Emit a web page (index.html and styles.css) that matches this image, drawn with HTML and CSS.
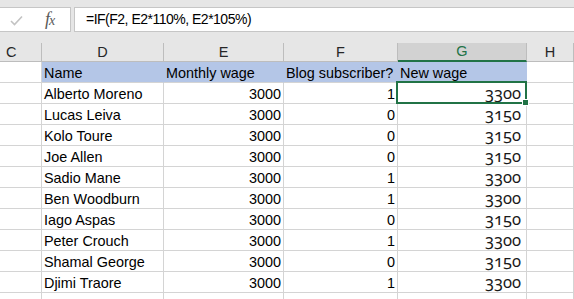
FILE: index.html
```html
<!DOCTYPE html>
<html>
<head>
<meta charset="utf-8">
<link rel="stylesheet" href="styles.css">
</head>
<body>
<div class="topbar">
  <div class="fbar">
    <div class="namebox">
      <svg class="check" width="13" height="11" viewBox="0 0 13 11"><path d="M1 6 L4.5 9.5 L12 1.5" fill="none" stroke="#c3c3c3" stroke-width="1.6"/></svg>
      <span class="fx">f<span class="x">x</span></span>
    </div>
    <div class="formula">=IF(F2, E2*110%, E2*105%)</div>
  </div>
</div>
<div class="sheet">
  <div class="ch c-c">C</div>
  <div class="ch">D</div>
  <div class="ch">E</div>
  <div class="ch">F</div>
  <div class="ch sel">G</div>
  <div class="ch">H</div>

  <div class="cell"></div>
  <div class="cell hd">Name</div>
  <div class="cell hd">Monthly wage</div>
  <div class="cell hd">Blog subscriber?</div>
  <div class="cell hd">New wage</div>
  <div class="cell"></div>

  <div class="cell"></div><div class="cell">Alberto Moreno</div><div class="cell num">3000</div><div class="cell num">1</div><div class="cell old active">3300</div><div class="cell"></div>
  <div class="cell"></div><div class="cell">Lucas Leiva</div><div class="cell num">3000</div><div class="cell num">0</div><div class="cell old">3150</div><div class="cell"></div>
  <div class="cell"></div><div class="cell">Kolo Toure</div><div class="cell num">3000</div><div class="cell num">0</div><div class="cell old">3150</div><div class="cell"></div>
  <div class="cell"></div><div class="cell">Joe Allen</div><div class="cell num">3000</div><div class="cell num">0</div><div class="cell old">3150</div><div class="cell"></div>
  <div class="cell"></div><div class="cell">Sadio Mane</div><div class="cell num">3000</div><div class="cell num">1</div><div class="cell old">3300</div><div class="cell"></div>
  <div class="cell"></div><div class="cell">Ben Woodburn</div><div class="cell num">3000</div><div class="cell num">1</div><div class="cell old">3300</div><div class="cell"></div>
  <div class="cell"></div><div class="cell">Iago Aspas</div><div class="cell num">3000</div><div class="cell num">0</div><div class="cell old">3150</div><div class="cell"></div>
  <div class="cell"></div><div class="cell">Peter Crouch</div><div class="cell num">3000</div><div class="cell num">1</div><div class="cell old">3300</div><div class="cell"></div>
  <div class="cell"></div><div class="cell">Shamal George</div><div class="cell num">3000</div><div class="cell num">0</div><div class="cell old">3150</div><div class="cell"></div>
  <div class="cell"></div><div class="cell">Djimi Traore</div><div class="cell num">3000</div><div class="cell num">1</div><div class="cell old">3300</div><div class="cell"></div>
  <div class="cell"></div><div class="cell"></div><div class="cell"></div><div class="cell"></div><div class="cell"></div><div class="cell"></div>
</div>
</body>
</html>
```

FILE: styles.css
```css
html, body {
  margin: 0;
  padding: 0;
  background: #fff;
  overflow: hidden;
}
body {
  width: 574px;
  height: 299px;
  font-family: "Liberation Sans", Arial, sans-serif;
  font-size: 14px;
  color: #000;
}
.topbar {
  background: #e6e6e6;
  height: 43px;
  padding-top: 7px;
  box-sizing: border-box;
}
.fbar {
  display: flex;
  height: 25px;
  gap: 3px;
}
.namebox {
  width: 71px;
  box-sizing: border-box;
  background: #fff;
  border: 1px solid #c6c6c6;
  border-left: none;
  display: flex;
  align-items: center;
}
.check {
  margin-left: 10px;
  margin-top: 2px;
}
.fx {
  margin-left: 22px;
  font-family: "Liberation Serif", serif;
  font-style: italic;
  font-size: 18px;
  color: #5a5a5a;
  letter-spacing: -1px;
  margin-top: -1px;
}
.fx .x {
  font-size: 14px;
}
.formula {
  flex: 1;
  background: #fff;
  border: 1px solid #c6c6c6;
  border-right: none;
  box-sizing: border-box;
  padding-left: 11px;
  line-height: 23px;
  font-size: 14px;
  letter-spacing: -0.5px;
  color: #000;
}
.sheet {
  display: grid;
  grid-template-columns: 42px 122px 120px 114px 129px 1fr;
  grid-template-rows: 19px;
  grid-auto-rows: 21px;
  height: 256px;
  overflow: hidden;
}
.ch {
  background: #e6e6e6;
  border-right: 1px solid #bdbdbd;
  border-bottom: 1px solid #bdbdbd;
  text-align: center;
  line-height: 18px;
  color: #262626;
  font-size: 14.5px;
}
.ch.c-c {
  text-align: left;
  padding-left: 6px;
}
.ch.sel {
  background: #d2d2d2;
  color: #217346;
  border-bottom: 2px solid #217346;
  line-height: 17px;
}
.ch:last-of-type {
  border-right: none;
}
.cell {
  border-right: 1px solid #d4d4d4;
  border-bottom: 1px solid #d4d4d4;
  padding: 0 2px;
  line-height: 22px;
  white-space: nowrap;
  font-size: 14.4px;
}
.cell.hd {
  background: #b4c6e7;
  border-right-color: #b4c6e7;
}
.cell.num {
  text-align: right;
}
.cell.old {
  text-align: right;
  padding-right: 5px;
  font-family: "Noto Sans", serif;
  font-variant-numeric: oldstyle-nums;
  font-feature-settings: "onum" 1;
  font-size: 16.5px;
  line-height: 19px;
  color: #1a1a1a;
}
.cell.active {
  position: relative;
}
.cell.active::before {
  content: "";
  position: absolute;
  left: -2px;
  top: -2px;
  right: -1px;
  bottom: -1px;
  border: 2px solid #217346;
}
.cell.active::after {
  content: "";
  position: absolute;
  right: -3px;
  bottom: -3px;
  width: 5px;
  height: 5px;
  background: #217346;
  border: 1px solid #fff;
}
```
